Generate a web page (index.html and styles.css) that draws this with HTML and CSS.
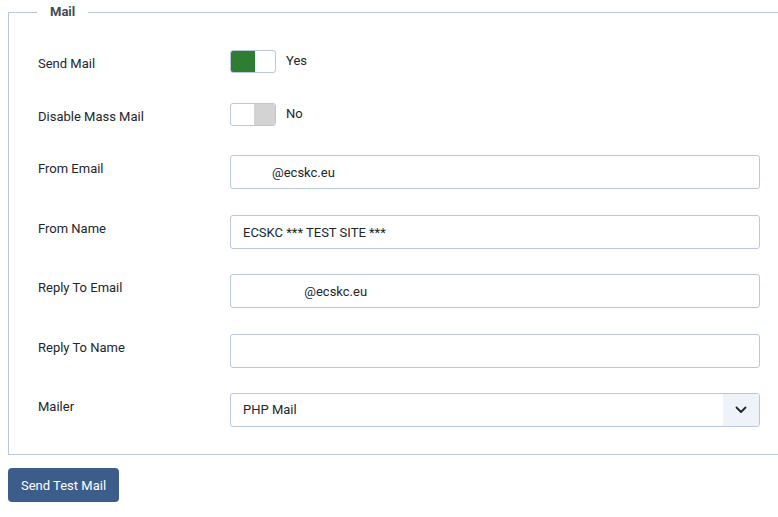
FILE: index.html
```html
<!DOCTYPE html>
<html lang="en">
<head>
  <meta charset="UTF-8">
  <title>Mail settings</title>
  <link rel="stylesheet" href="styles.css">
</head>
<body>
  <fieldset class="options">
    <legend>Mail</legend>
    <div class="row row-switch">
      <label class="control-label">Send Mail</label>
      <div class="controls">
        <span class="switch on"><span class="knob"></span></span>
        <span class="switch-text">Yes</span>
      </div>
    </div>
    <div class="row row-switch">
      <label class="control-label">Disable Mass Mail</label>
      <div class="controls">
        <span class="switch off"><span class="knob"></span></span>
        <span class="switch-text">No</span>
      </div>
    </div>
    <div class="row">
      <label class="control-label">From Email</label>
      <div class="controls"><input class="form-control" type="text" value="&#160;&#160;&#160;&#160;&#160;&#160;&#160;&#160;&#160;@ecskc.eu"></div>
    </div>
    <div class="row tight">
      <label class="control-label">From Name</label>
      <div class="controls"><input class="form-control" type="text" value="ECSKC *** TEST SITE ***"></div>
    </div>
    <div class="row">
      <label class="control-label">Reply To Email</label>
      <div class="controls"><input class="form-control" type="text" value="&#160;&#160;&#160;&#160;&#160;&#160;&#160;&#160;&#160;&#160;&#160;&#160;&#160;&#160;&#160;&#160;&#160;&#160;&#160;@ecskc.eu"></div>
    </div>
    <div class="row tight">
      <label class="control-label">Reply To Name</label>
      <div class="controls"><input class="form-control" type="text" value=""></div>
    </div>
    <div class="row last">
      <label class="control-label">Mailer</label>
      <div class="controls">
        <div class="select">
          <span class="select-value">PHP Mail</span>
          <span class="select-arrow">
            <svg width="12" height="8" viewBox="0 0 12 8"><path d="M1.5 1.5 6 6l4.5-4.5" fill="none" stroke="#1f2429" stroke-width="1.8" stroke-linecap="round" stroke-linejoin="round"/></svg>
          </span>
        </div>
      </div>
    </div>
  </fieldset>
  <button class="btn-primary" type="button">Send Test Mail</button>
</body>
</html>
```

FILE: styles.css
```css
body { margin: 0; padding: 0 8px; font-family: Roboto, "Liberation Sans", sans-serif; font-size: 13px; color: #22262a; background: #fff; overflow: hidden; }
.options { width: 790px; box-sizing: border-box; margin: 4px 0 0; padding: 30px 0 27px 29px; border: 1px solid #b9c6db; min-width: 0; }
.options legend { padding: 0 13px; margin-left: -1px; font-weight: bold; font-size: 13px; color: #3f4a56; line-height: 16px; }
.row { display: grid; grid-template-columns: 192px 530px; margin-bottom: 26px; }
.row.tight { margin-bottom: 25px; }
.row-switch { margin-bottom: 29px; }
.row-switch + .row-switch { margin-bottom: 28px; }
.row.last { margin-bottom: 0; }
.control-label { padding-top: 4px; line-height: 20px; }
.controls { display: flex; align-items: center; }
.row-switch .controls { align-self: start; }
.switch { display: flex; width: 46px; height: 23px; box-sizing: border-box; border: 1px solid #b9c6db; border-radius: 3px; overflow: hidden; background: #fff; }
.switch .knob { width: 24px; height: 100%; }
.switch.on .knob { background: #2e7d32; }
.switch.off { justify-content: flex-end; }
.switch.off .knob { width: 21px; background: #d3d3d3; }
.switch-text { margin-left: 10px; margin-top: -3px; }
.form-control { width: 530px; height: 34px; box-sizing: border-box; border: 1px solid #b9c6db; border-radius: 3px; padding: 0 12px; font-family: inherit; font-size: 13px; color: #22262a; background: #fff; }
.select { display: flex; width: 530px; height: 34px; box-sizing: border-box; border: 1px solid #b9c6db; border-radius: 3px; overflow: hidden; }
.select-value { flex: 1; padding-left: 12px; line-height: 32px; }
.select-arrow { width: 36px; display: flex; align-items: center; justify-content: center; background: #eef3fa; }
.btn-primary { margin-top: 13px; height: 34px; padding: 0 13px; border: 0; border-radius: 4px; background: #3c5d8a; color: #fff; font-family: inherit; font-size: 13px; }
```
